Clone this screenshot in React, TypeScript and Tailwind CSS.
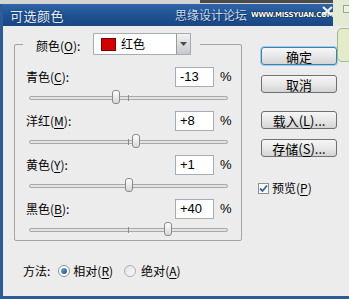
import React from "react"

interface SliderRow {
  label: string
  key: string
  value: number
}

const rows: SliderRow[] = [
  { label: "青色", key: "C", value: -13 },
  { label: "洋红", key: "M", value: 8 },
  { label: "黄色", key: "Y", value: 1 },
  { label: "黑色", key: "B", value: 40 },
]

function Hotkey({ label, k, tail = ":" }: { label: string; k: string; tail?: string }) {
  return (
    <span className="whitespace-nowrap">
      {label}(<span className="underline underline-offset-2">{k}</span>){tail}
    </span>
  )
}

function Button({ children, primary = false }: { children: React.ReactNode; primary?: boolean }) {
  return (
    <div
      className={`h-[18px] w-[76px] flex items-center justify-center rounded-[3px] border text-[13px] leading-none bg-gradient-to-b from-[#f6f6f6] via-[#e8e8e8] to-[#d4d4d4] ${
        primary ? "border-[#3c7fb1] shadow-[0_0_0_1px_#9fd0f0]" : "border-[#707070]"
      }`}
    >
      {children}
    </div>
  )
}

export default function App() {
  return (
    <div className="relative w-[349px] h-[299px] overflow-hidden bg-[#ececec] text-black font-['Noto_Sans_CJK_SC',sans-serif] text-[12px]">
      {/* strip above the window */}
      <div className="h-[4px] bg-[#d4d4d4] flex">
        <div className="ml-[200px] w-[133px] h-[3px] bg-[#4c4c4c]" />
        <div className="flex-1 bg-[#e4ebd3]" />
      </div>

      <div className="h-[295px] border-l-[3px] border-b-[3px] border-[#2c5c98] flex flex-col">
        {/* title bar */}
        <div className="h-[22px] flex">
          <div className="w-[330px] shrink-0 flex items-center whitespace-nowrap bg-gradient-to-b from-[#2f66a8] via-[#1f5292] to-[#1a4784] pl-[7px]">
            <span className="shrink-0 text-[13px] leading-none text-[#e6edf8] tracking-[0.5px] [text-shadow:0_0_2px_#0b2a55]">可选颜色</span>
            <span className="shrink-0 ml-[111px] text-[12px] leading-none text-[#c9d9ee] [text-shadow:1px_1px_0_#16365f]">思缘设计论坛</span>
            <span className="shrink-0 ml-[4px] text-[7px] leading-none font-bold font-['DejaVu_Sans',sans-serif] tracking-[-0.3px] text-white [text-shadow:0_0_1px_#000,0_0_1px_#000]">
              WWW.MISSYUAN.COM
            </span>
          </div>
          <div className="flex-1 bg-[#e4ebd3]" />
        </div>

        {/* body */}
        <div className="flex-1 flex pt-[9px] pl-[11px] bg-[#ececec]">
          <div className="w-[228px] flex flex-col">
            <fieldset className="border border-[#a4a4a4] rounded-[2px] p-0 m-0 min-w-0">
              <legend className="ml-[8px] w-[177px] h-[18px] pl-[13px] pr-[9px]">
                <div className="flex items-start -mt-[2px]">
                  <span className="mt-[2px] leading-[22px] text-[12px]">
                    <Hotkey label="颜色" k="O" />
                  </span>
                  <div className="ml-auto w-[98px] h-[22px] flex items-center bg-white border border-[#a5acb5]">
                    <div className="ml-[7px] w-[15px] h-[13px] bg-[#d20000] border border-[#7a0000]" />
                    <span className="ml-[5px] text-[12px]">红色</span>
                    <div className="ml-auto w-[14px] h-[20px] flex items-center justify-center border-l border-[#9a9a9a] bg-gradient-to-b from-[#f2f2f2] to-[#c8c8c8]">
                      <svg width="7" height="4" viewBox="0 0 7 4">
                        <path d="M0 0 L7 0 L3.5 4 Z" fill="#4a4a4a" />
                      </svg>
                    </div>
                  </div>
                </div>
              </legend>

              <div className="pt-[14px]">
                {rows.map((row, i) => (
                  <div key={row.key}>
                    <div className="h-[20px] flex items-center pl-[11px]">
                      <span className="text-[12px]">
                        <Hotkey label={row.label} k={row.key} />
                      </span>
                      <div className="ml-auto w-[39px] h-[20px] flex items-center pl-[4px] bg-white border border-[#a5acb5] text-[13px] font-['Liberation_Sans',sans-serif]">
                        {row.value > 0 ? `+${row.value}` : row.value}
                      </div>
                      <span className="w-[27px] pl-[6px] text-[13px] font-['Liberation_Sans',sans-serif]">%</span>
                    </div>
                    <div className={`relative ml-[14px] w-[199px] ${i === rows.length - 1 ? "h-[21px]" : "h-[24px]"}`}>
                      <div className="absolute left-0 right-0 top-[9px] h-[4px] rounded-full border border-[#a8a8a8] bg-[#e4e4e4]" />
                      <div className="absolute left-[99px] top-[8px] w-px h-[6px] bg-[#8c8c8c]" />
                      <div
                        className="absolute top-[3px] w-[8px] h-[14px] rounded-[3px] border border-[#8a8a8a] bg-gradient-to-b from-[#ffffff] to-[#d6d6d6]"
                        style={{ left: `${99.5 + row.value * 0.99 - 4}px` }}
                      />
                    </div>
                  </div>
                ))}
              </div>
            </fieldset>

            {/* method */}
            <div className="mt-[22px] pl-[9px] h-[16px] flex items-center text-[12px]">
              <span>方法:</span>
              <div className="ml-[8px] w-[12px] h-[12px] rounded-full border border-[#8e8f8f] bg-white flex items-center justify-center">
                <div className="w-[6px] h-[6px] rounded-full bg-gradient-to-br from-[#6fb2e6] to-[#114f8c]" />
              </div>
              <span className="ml-[3px]">
                <Hotkey label="相对" k="R" tail="" />
              </span>
              <div className="ml-[11px] w-[12px] h-[12px] rounded-full border border-[#b0b0b0] bg-gradient-to-br from-[#e2e2e2] to-[#fafafa]" />
              <span className="ml-[5px]">
                <Hotkey label="绝对" k="A" tail="" />
              </span>
            </div>
          </div>

          {/* buttons */}
          <div className="ml-[19px] w-[76px] flex flex-col">
            <div className="mt-[12px]">
              <Button primary>确定</Button>
            </div>
            <div className="mt-[10px]">
              <Button>取消</Button>
            </div>
            <div className="mt-[18px]">
              <Button>
                <Hotkey label="载入" k="L" tail="..." />
              </Button>
            </div>
            <div className="mt-[10px]">
              <Button>
                <Hotkey label="存储" k="S" tail="..." />
              </Button>
            </div>
            <div className="mt-[22px] flex items-center -ml-[3px]">
              <div className="w-[11px] h-[11px] border border-[#8e8f8f] bg-white flex items-center justify-center">
                <svg width="9" height="9" viewBox="0 0 9 9">
                  <path d="M1 4.5 L3.5 7 L8 1.5" stroke="#3b5f93" strokeWidth="1.8" fill="none" />
                </svg>
              </div>
              <span className="ml-[3px] text-[12px]">
                <Hotkey label="预览" k="P" tail="" />
              </span>
            </div>
          </div>
          <div className="flex-1" />
        </div>
      </div>

      {/* close button of the title bar */}
      <svg className="absolute left-[322px] top-[6px]" width="11" height="10" viewBox="0 0 11 10">
        <path d="M1 1 L10 9 M10 1 L1 9" stroke="#f2f2f2" strokeWidth="2.2" />
      </svg>
      {/* overlapping window edge on the right */}
      <div className="absolute left-[343px] top-[5px] w-[8px] h-[8px] border border-[#9aa68a] bg-[#eef2e4]" />
      <div className="absolute left-[337px] top-[28px] w-[16px] h-[34px] rounded-[5px] border border-[#a8b888] bg-[#e3ebc9]" />
    </div>
  )
}
